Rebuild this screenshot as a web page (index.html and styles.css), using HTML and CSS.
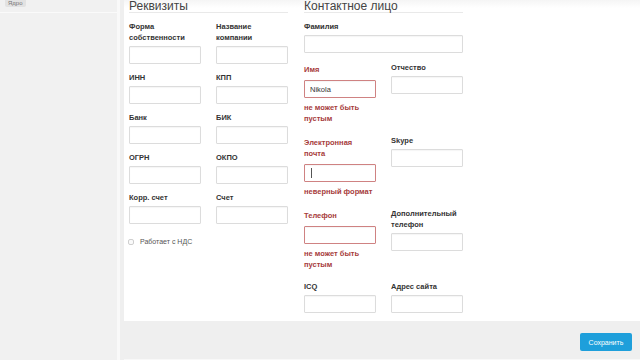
FILE: index.html
```html
<!DOCTYPE html>
<html lang="ru">
<head>
  <meta charset="UTF-8">
  <meta name="viewport" content="width=device-width, initial-scale=1.0">
  <title>Реквизиты</title>
  <link rel="stylesheet" href="styles.css">
</head>
<body>

<div class="layout">
  <aside class="sidebar">
    <div class="sidebar-top"><span class="badge">Ядро</span></div>
  </aside>

  <main class="main">
    <div class="panel">

      <!-- Реквизиты -->
      <section class="block">
        <h3 class="block-title">Реквизиты</h3>
        <div class="grid">
          <div class="field">
            <label class="label">Форма собственности</label>
            <input class="input" type="text">
          </div>
          <div class="field">
            <label class="label">Название компании</label>
            <input class="input" type="text">
          </div>
          <div class="field">
            <label class="label">ИНН</label>
            <input class="input" type="text">
          </div>
          <div class="field">
            <label class="label">КПП</label>
            <input class="input" type="text">
          </div>
          <div class="field">
            <label class="label">Банк</label>
            <input class="input" type="text">
          </div>
          <div class="field">
            <label class="label">БИК</label>
            <input class="input" type="text">
          </div>
          <div class="field">
            <label class="label">ОГРН</label>
            <input class="input" type="text">
          </div>
          <div class="field">
            <label class="label">ОКПО</label>
            <input class="input" type="text">
          </div>
          <div class="field">
            <label class="label">Корр. счет</label>
            <input class="input" type="text">
          </div>
          <div class="field">
            <label class="label">Счет</label>
            <input class="input" type="text">
          </div>
        </div>
        <label class="check">
          <input type="checkbox" class="check-box">
          <span>Работает с НДС</span>
        </label>
      </section>

      <!-- Контактное лицо -->
      <section class="block">
        <h3 class="block-title">Контактное лицо</h3>
        <div class="field contact">
          <label class="label">Фамилия</label>
          <input class="input input-wide" type="text">
        </div>
        <div class="grid">
          <div class="field contact has-error">
            <label class="label">Имя</label>
            <input class="input" type="text" value="Nikola">
            <div class="error">не может быть пустым</div>
          </div>
          <div class="field contact">
            <label class="label">Отчество</label>
            <input class="input" type="text">
          </div>
          <div class="field contact has-error">
            <label class="label">Электронная<br>почта</label>
            <div class="input-wrap">
              <input class="input" type="text">
              <span class="caret"></span>
            </div>
            <div class="error nowrap">неверный формат</div>
          </div>
          <div class="field contact">
            <label class="label">Skype</label>
            <input class="input" type="text">
          </div>
          <div class="field contact has-error">
            <label class="label">Телефон</label>
            <input class="input" type="text">
            <div class="error">не может быть пустым</div>
          </div>
          <div class="field contact">
            <label class="label">Дополнительный телефон</label>
            <input class="input" type="text">
          </div>
          <div class="field contact">
            <label class="label">ICQ</label>
            <input class="input" type="text">
          </div>
          <div class="field contact">
            <label class="label">Адрес сайта</label>
            <input class="input" type="text">
          </div>
        </div>
      </section>

    </div>

    <div class="footer">
      <button class="btn-save">Сохранить</button>
    </div>
  </main>
</div>

</body>
</html>
```

FILE: styles.css
```css
html, body {
  margin: 0;
  padding: 0;
}

body {
  font-family: "Liberation Sans", Arial, sans-serif;
  background: #f1f1f1;
  color: #333;
  height: 100vh;
  overflow: hidden;
}

.layout {
  display: flex;
  height: 100vh;
}

/* Sidebar */
.sidebar {
  width: 117px;
  background: #f1f1f1;
  border-right: 3px solid #f9f9f9;
  flex-shrink: 0;
}

.sidebar-top {
  height: 12px;
  border-bottom: 1px solid #fafafa;
  padding-left: 5px;
  overflow: hidden;
}

.badge {
  display: block;
  width: fit-content;
  padding: 0 3px;
  font-size: 6px;
  line-height: 7px;
  color: #777;
  background: #e2e2e2;
  border-radius: 0 0 2px 2px;
}

/* Main area */
.main {
  flex: 1;
  display: flex;
  flex-direction: column;
  background: #efefef;
  padding-left: 4px;
}

.panel {
  height: 321px;
  background: linear-gradient(#f5f5f5, #ffffff 8px);
  display: flex;
  gap: 16px;
  padding-left: 5px;
}

.block {
  width: 159px;
}

.block-title {
  margin: 0 0 8px;
  font-size: 12px;
  line-height: 12px;
  font-weight: normal;
  color: #444;
  border-bottom: 1px solid #e9e9e9;
}

.grid {
  display: grid;
  grid-template-columns: 72px 72px;
  column-gap: 15px;
  align-items: start;
}

.field {
  margin-bottom: 8px;
}

.field.contact {
  margin-bottom: 9px;
}

.label {
  display: block;
  font-size: 7.5px;
  line-height: 11px;
  font-weight: bold;
  color: #333;
  margin-bottom: 3px;
}

.input {
  display: block;
  box-sizing: border-box;
  width: 72px;
  height: 18px;
  margin: 0;
  padding: 0 5px;
  border: 1px solid #dcdcdc;
  border-radius: 1px;
  box-shadow: inset 0 1px 1px rgba(0, 0, 0, 0.04);
  background: #fff;
  font-family: inherit;
  font-size: 7.5px;
  color: #333;
  outline: none;
}

.input-wide {
  width: 159px;
}

.input-wrap {
  position: relative;
}

.caret {
  position: absolute;
  left: 7px;
  top: 4px;
  width: 1px;
  height: 10px;
  background: #555;
}

/* Error state */
.field.has-error {
  margin-bottom: 11px;
}

.has-error .label {
  color: #a63b3b;
  margin-top: 2px;
  margin-bottom: 5px;
}

.has-error .input {
  border-color: #cf8282;
}

.error {
  margin-top: 4px;
  font-size: 7.5px;
  line-height: 11px;
  font-weight: bold;
  color: #a63b3b;
}

.error.nowrap {
  white-space: nowrap;
}

/* Checkbox */
.check {
  display: flex;
  align-items: center;
  gap: 6px;
  margin-top: 5px;
  font-size: 7px;
  line-height: 10px;
  color: #555;
}

.check-box {
  appearance: none;
  width: 6px;
  height: 6px;
  margin: 0 0 0 -1px;
  border: 1px solid #cfcfcf;
  border-radius: 2px;
  background: #fafafa;
}

/* Footer */
.footer {
  flex: 1;
  display: flex;
  justify-content: flex-end;
  align-items: flex-start;
  padding: 12px 8px 0 0;
  border-bottom: 1px solid #f8f8f8;
}

.btn-save {
  width: 52px;
  height: 18px;
  padding: 0;
  background: #1e9fdb;
  color: white;
  font-family: inherit;
  font-size: 7px;
  border: none;
  border-radius: 2px;
  cursor: pointer;
}
```
